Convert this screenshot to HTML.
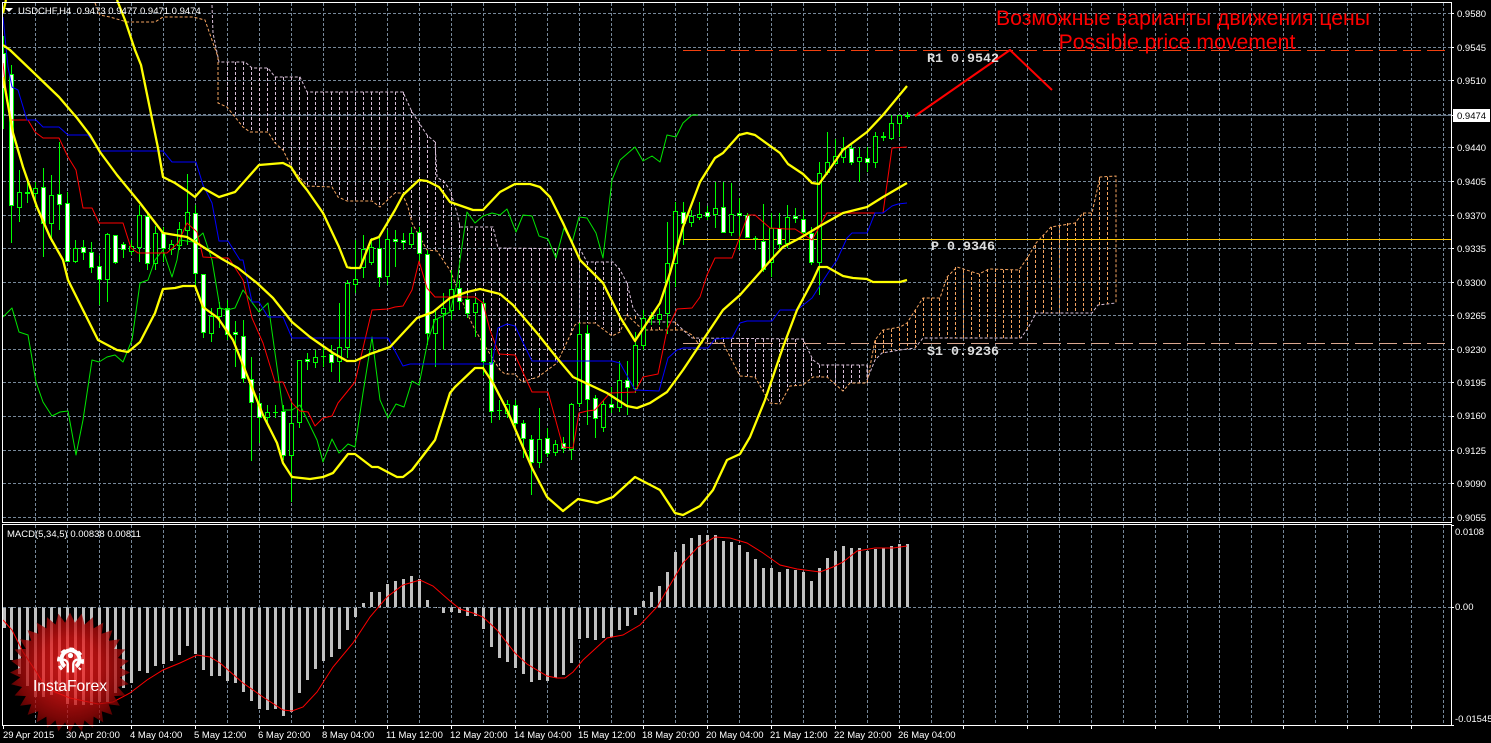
<!DOCTYPE html>
<html><head><meta charset="utf-8"><title>USDCHF,H4</title>
<style>
html,body{margin:0;padding:0;background:#000;width:1491px;height:743px;overflow:hidden}
svg{display:block}
text{font-family:"Liberation Sans","Noto Sans CJK SC",sans-serif;font-size:9.5px;fill:#fff}
.m{font-family:"Liberation Mono",monospace;font-size:13.33px;font-weight:bold;fill:#ddd}
.t{font-size:21.2px;fill:#f00;text-anchor:middle}
</style></head><body>
<svg width="1491" height="743" viewBox="0 0 1491 743" xmlns="http://www.w3.org/2000/svg">
<defs>
<radialGradient id="lg" gradientUnits="userSpaceOnUse" cx="0" cy="-6" r="66">
<stop offset="0" stop-color="#ff2020"/><stop offset=".45" stop-color="#e01414"/><stop offset=".8" stop-color="#a00808"/><stop offset="1" stop-color="#6a0000"/>
</radialGradient>
</defs>
<rect width="1491" height="743" fill="#000"/>
<!-- grid -->
<g fill="none" stroke="#778899" stroke-dasharray="3 2">
<path d="M3 13.5H1451M3 47.5H1451M3 80.5H1451M3 114.5H1451M3 147.5H1451M3 181.5H1451M3 215.5H1451M3 248.5H1451M3 282.5H1451M3 315.5H1451M3 349.5H1451M3 382.5H1451M3 416.5H1451M3 450.5H1451M3 483.5H1451M3 517.5H1451"/>
<path d="M35.5 3V522M67.5 3V522M99.5 3V522M131.5 3V522M163.5 3V522M195.5 3V522M227.5 3V522M259.5 3V522M291.5 3V522M323.5 3V522M355.5 3V522M387.5 3V522M419.5 3V522M451.5 3V522M483.5 3V522M515.5 3V522M547.5 3V522M579.5 3V522M611.5 3V522M643.5 3V522M675.5 3V522M707.5 3V522M739.5 3V522M771.5 3V522M803.5 3V522M835.5 3V522M867.5 3V522M899.5 3V522M931.5 3V522M963.5 3V522M995.5 3V522M1027.5 3V522M1059.5 3V522M1091.5 3V522M1123.5 3V522M1155.5 3V522M1187.5 3V522M1219.5 3V522M1251.5 3V522M1283.5 3V522M1315.5 3V522M1347.5 3V522M1379.5 3V522M1411.5 3V522M1443.5 3V522"/>
<path d="M35.5 525V725M67.5 525V725M99.5 525V725M131.5 525V725M163.5 525V725M195.5 525V725M227.5 525V725M259.5 525V725M291.5 525V725M323.5 525V725M355.5 525V725M387.5 525V725M419.5 525V725M451.5 525V725M483.5 525V725M515.5 525V725M547.5 525V725M579.5 525V725M611.5 525V725M643.5 525V725M675.5 525V725M707.5 525V725M739.5 525V725M771.5 525V725M803.5 525V725M835.5 525V725M867.5 525V725M899.5 525V725M931.5 525V725M963.5 525V725M995.5 525V725M1027.5 525V725M1059.5 525V725M1091.5 525V725M1123.5 525V725M1155.5 525V725M1187.5 525V725M1219.5 525V725M1251.5 525V725M1283.5 525V725M1315.5 525V725M1347.5 525V725M1379.5 525V725M1411.5 525V725M1443.5 525V725"/>
</g>
<path d="M3 115.500H1451" stroke="#5f6f80" fill="none"/>
<!-- ichimoku cloud -->
<g fill="none" stroke-dasharray="3 2">
<path stroke="#d8bfd8" d="M212 5L213 33L219 62H245L252 68H268L275 77H300L307 92H403L412 112L427 135L435 142L437 177L445 183L450 190L457 213L460 227H493L498 248L580 249L587 262H613L620 270L627 283L633 308L643 322H675L683 330L692 338L803 339L813 360L820 365H867V380L875 360L882 353L900 350L915 348L923 338H1021L1028 328L1036 313H1092L1098 305L1116 303"/>
<path stroke="#d8bfd8" d="M227.5 62V107M235.5 62V114M243.5 62V127M251.5 67V132M259.5 68V132M267.5 68V132M275.5 77V143M283.5 77V150M291.5 77V167M299.5 77V180M307.5 92V186M315.5 92V186M323.5 92V187M331.5 92V187M339.5 92V197M347.5 92V201M355.5 92V201M363.5 92V202M371.5 92V202M379.5 92V207M387.5 92V200M395.5 92V193M403.5 92V193M411.5 110V220M419.5 122V238M427.5 135V250M435.5 142V251M443.5 180V260M451.5 192V272M459.5 225V308M467.5 228V313M475.5 228V330M483.5 228V343M491.5 228V358M499.5 248V370M507.5 248V374M515.5 248V374M523.5 248V382M531.5 248V379M539.5 248V377M547.5 248V370M555.5 248V363M563.5 248V350M571.5 248V335M579.5 250V323M587.5 262V323M595.5 262V323M603.5 262V328M611.5 262V336M619.5 268V332M627.5 283V315M699.5 339V343M707.5 339V343M715.5 339V343M723.5 339V343M731.5 339V360M739.5 339V375M747.5 339V376M755.5 339V377M763.5 339V392M771.5 339V403M779.5 339V404M787.5 339V390M795.5 339V386M803.5 339V385M811.5 358V378M819.5 365V377M827.5 365V377M835.5 365V386M843.5 365V391M851.5 365V383M859.5 365V383M867.5 365V383"/>
<path stroke="#f4a460" d="M95 3L100 15L110 17L127 22H155L163 17H193L205 20L213 43L218 57V103L227 107L243 127L250 132H268L275 143L283 150L292 168L307 186L332 187L338 197L347 201H372L380 207L395 193H402L408 207L412 223L427 250L437 251L443 260L450 270L467 313L475 330L483 343L500 370L505 374H515L522 382L538 377L557 363L575 325L578 323H595L612 336L620 332L627 315L643 330H683L692 335L698 343H723L740 376L755 377L770 403L780 404L790 386L803 385L813 377H827L843 391L850 383H867L875 340L883 330L900 327L907 323L923 298H940L947 277L957 267L979 274L989 269L1019 270L1028 257L1036 243L1051 227L1075 223L1083 213H1092L1100 177L1116 176V303"/>
<path stroke="#f4a460" d="M635.5 316V320M643.5 322V330M651.5 322V330M659.5 322V330M667.5 322V330M675.5 322V330M875.5 340V360M883.5 330V353M891.5 329V351M899.5 328V350M907.5 323V349M915.5 310V348M923.5 298V338M931.5 298V338M939.5 298V338M947.5 277V338M955.5 267V338M963.5 270V338M971.5 272V338M979.5 274V338M987.5 269V338M995.5 269V338M1003.5 270V338M1011.5 270V338M1019.5 270V338M1027.5 257V330M1035.5 245V313M1043.5 235V313M1051.5 227V313M1059.5 225V313M1067.5 223V313M1075.5 223V313M1083.5 213V313M1091.5 213V313M1099.5 177V305M1107.5 177V304"/>
</g>
<!-- levels -->
<g fill="none">
<path d="M683 50.5H1446" stroke="#f1400f" stroke-dasharray="18 6"/>
<path d="M683 343.5H1446" stroke="#dba78f" stroke-dasharray="18 6"/>
<path d="M683 239.5H1451" stroke="#ffc800"/>
</g>
<!-- candles -->
<path fill="none" stroke="#00ff00" d="M3.5 36V129M11.5 65V243M19.5 170V222M27.5 182V203M35.5 182V207M43.5 168V257M51.5 175V242M59.5 142V230M67.5 192V262M75.5 240V263M83.5 240V260M91.5 242V273M99.5 255V305M107.5 233V302M115.5 235V264M123.5 242V258M131.5 240V255M139.5 205V262M147.5 212V270M155.5 226V270M163.5 227V262M171.5 240V255M179.5 222V250M187.5 174V245M195.5 205V290M203.5 274V338M211.5 308V342M219.5 302V328M227.5 300V340M235.5 321V367M243.5 320V383M251.5 357V461M259.5 395V443M267.5 405V425M275.5 405V418M283.5 405V460M291.5 402V502M299.5 360V428M307.5 353V370M315.5 350V368M323.5 345V367M331.5 345V372M339.5 303V382M347.5 280V358M355.5 240V293M363.5 235V278M371.5 238V265M379.5 238V287M387.5 230V285M395.5 230V267M403.5 233V250M411.5 227V248M419.5 227V262M427.5 250V345M435.5 310V367M443.5 293V350M451.5 270V320M459.5 280V310M467.5 295V318M475.5 298V337M483.5 300V375M491.5 348V423M499.5 400V420M507.5 400V418M515.5 400V428M523.5 420V458M531.5 435V495M539.5 408V468M547.5 428V457M555.5 440V456M563.5 437V453M571.5 403V460M579.5 323V407M587.5 325V425M595.5 395V438M603.5 400V432M611.5 387V413M619.5 361V412M627.5 361V415M635.5 332V393M643.5 310V350M651.5 312V325M659.5 308V325M667.5 222V334M675.5 202V287M683.5 202V245M691.5 210V227M699.5 202V220M707.5 206V220M715.5 182V228M723.5 182V233M731.5 183V236M739.5 198V250M747.5 213V238M755.5 236V250M763.5 204V272M771.5 213V277M779.5 213V250M787.5 205V248M795.5 208V223M803.5 210V236M811.5 227V265M819.5 162V295M827.5 132V175M835.5 139V165M843.5 137V163M851.5 145V165M859.5 147V182M867.5 147V172M875.5 132V168M883.5 132V141M891.5 115V140M899.5 115V137M907.5 112V119M25 193.5h5M25 192.5h5M273 412.5h5M321 356.5h5M497 410.5h5M753 238.5h5M881 137.5h5M881 136.5h5M905 116.5h5M905 115.5h5"/>
<path fill="#000" stroke="#00ff00" d="M17.5 192.5h4V207.5h-4zM33.5 188.5h4V193.5h-4zM49.5 195.5h4V223.5h-4zM73.5 248.5h4V261.5h-4zM105.5 234.5h4V279.5h-4zM129.5 246.5h4V251.5h-4zM137.5 215.5h4V247.5h-4zM153.5 233.5h4V263.5h-4zM169.5 244.5h4V249.5h-4zM177.5 229.5h4V245.5h-4zM185.5 212.5h4V230.5h-4zM209.5 316.5h4V333.5h-4zM217.5 308.5h4V316.5h-4zM265.5 412.5h4V417.5h-4zM289.5 423.5h4V455.5h-4zM297.5 360.5h4V422.5h-4zM313.5 357.5h4V362.5h-4zM337.5 347.5h4V361.5h-4zM345.5 283.5h4V347.5h-4zM353.5 279.5h4V284.5h-4zM361.5 249.5h4V267.5h-4zM369.5 247.5h4V262.5h-4zM385.5 239.5h4V276.5h-4zM409.5 233.5h4V244.5h-4zM433.5 319.5h4V333.5h-4zM441.5 308.5h4V313.5h-4zM449.5 289.5h4V310.5h-4zM473.5 303.5h4V312.5h-4zM505.5 404.5h4V413.5h-4zM537.5 439.5h4V462.5h-4zM553.5 444.5h4V452.5h-4zM569.5 404.5h4V449.5h-4zM577.5 334.5h4V403.5h-4zM601.5 404.5h4V427.5h-4zM617.5 380.5h4V407.5h-4zM633.5 345.5h4V388.5h-4zM641.5 318.5h4V345.5h-4zM649.5 316.5h4V318.5h-4zM657.5 314.5h4V319.5h-4zM665.5 263.5h4V313.5h-4zM673.5 211.5h4V263.5h-4zM689.5 216.5h4V222.5h-4zM697.5 214.5h4V217.5h-4zM713.5 208.5h4V214.5h-4zM729.5 214.5h4V232.5h-4zM769.5 228.5h4V262.5h-4zM785.5 217.5h4V243.5h-4zM817.5 173.5h4V262.5h-4zM825.5 162.5h4V172.5h-4zM833.5 156.5h4V163.5h-4zM841.5 148.5h4V157.5h-4zM857.5 157.5h4V161.5h-4zM873.5 136.5h4V162.5h-4zM889.5 123.5h4V138.5h-4zM897.5 115.5h4V123.5h-4z"/>
<path fill="#fff" stroke="#00ff00" d="M1.5 53.5h4V88.5h-4zM9.5 74.5h4V205.5h-4zM41.5 187.5h4V223.5h-4zM57.5 194.5h4V204.5h-4zM65.5 203.5h4V261.5h-4zM81.5 247.5h4V252.5h-4zM89.5 252.5h4V267.5h-4zM97.5 266.5h4V279.5h-4zM113.5 235.5h4V262.5h-4zM121.5 244.5h4V249.5h-4zM145.5 216.5h4V263.5h-4zM161.5 233.5h4V248.5h-4zM193.5 213.5h4V273.5h-4zM201.5 274.5h4V332.5h-4zM225.5 308.5h4V334.5h-4zM233.5 332.5h4V334.5h-4zM241.5 336.5h4V378.5h-4zM249.5 379.5h4V402.5h-4zM257.5 403.5h4V417.5h-4zM281.5 411.5h4V455.5h-4zM305.5 359.5h4V361.5h-4zM329.5 354.5h4V362.5h-4zM377.5 248.5h4V277.5h-4zM393.5 239.5h4V241.5h-4zM401.5 240.5h4V242.5h-4zM417.5 232.5h4V253.5h-4zM425.5 254.5h4V333.5h-4zM457.5 288.5h4V301.5h-4zM465.5 299.5h4V313.5h-4zM481.5 303.5h4V361.5h-4zM489.5 362.5h4V411.5h-4zM513.5 405.5h4V423.5h-4zM521.5 423.5h4V438.5h-4zM529.5 439.5h4V462.5h-4zM545.5 438.5h4V453.5h-4zM561.5 443.5h4V448.5h-4zM585.5 333.5h4V399.5h-4zM593.5 398.5h4V418.5h-4zM609.5 404.5h4V407.5h-4zM625.5 380.5h4V387.5h-4zM681.5 212.5h4V223.5h-4zM705.5 212.5h4V216.5h-4zM721.5 207.5h4V232.5h-4zM737.5 213.5h4V215.5h-4zM745.5 215.5h4V237.5h-4zM761.5 241.5h4V269.5h-4zM777.5 228.5h4V244.5h-4zM793.5 216.5h4V218.5h-4zM801.5 219.5h4V232.5h-4zM809.5 233.5h4V262.5h-4zM849.5 148.5h4V162.5h-4zM865.5 158.5h4V162.5h-4z"/>
<!-- indicators -->
<g fill="none" stroke-linejoin="round">
<path stroke="#00e600" d="M3 317L12 308L19 332L28 335L36 382L43 402L52 416L60 412L68 411L76 455L83 420L92 360L99 362L107 357L115 355L123 362L132 340L140 283L148 280L155 260L163 250L172 277L177 260L180 240L193 242L203 233L212 260L220 308L227 310L235 308L243 290L259 312L268 303L283 410L292 410L300 405L317 440L323 462L332 439L339 453L348 444L355 447L363 393L372 337L380 400L388 418L396 404L404 407L412 381L419 385L428 340L435 320L450 312L457 283L460 260L467 212L475 223L483 216L492 213L500 215L507 209L516 232L523 215L532 216L539 236L548 239L556 258L564 228L572 243L579 217L587 218L596 233L603 258L612 180L620 160L635 147L643 161L652 156L660 162L667 135L676 137L683 123L692 115H698"/>
<path stroke="#f00" d="M3 63L5 83L11 120H28L35 132L43 138H59L68 157L76 170L83 208H92L99 223H123L131 248L138 253H167L178 243L187 223L197 232L203 257L220 258H228L230 260L243 280L252 318L263 343L275 382H283L292 403L300 411L308 412L315 426L323 418L332 416L338 403L355 382L372 310L388 309L395 307L403 306L412 290L419 261L427 288L435 297H475L483 303L490 330L499 354L515 355L532 392H548L563 447L573 448L579 413L587 411L595 410L610 393L635 392L643 377L658 374L667 330L677 309L692 308L700 297L707 275L715 258H732L748 215H755L770 228L787 229H795L812 240L827 213H883L892 148L907 147"/>
<path stroke="#0000ff" d="M3 17L8 67L12 87L18 90L27 120H36L43 127H59L68 135H88L100 151H163L172 162H196L203 185L212 203L219 241H228L240 260L243 260L252 302H259L268 317H283L292 338H388L403 366L410 364H492L498 328L507 324L515 326L532 361H612L620 363L635 390L659 391L668 358L677 350L683 348H708L715 339L732 338L740 323L747 321H772L780 310H797L812 298L828 273L837 260L847 238L852 233H867L875 213H883L892 206L898 204L907 203"/>
<g stroke="#ffff00" stroke-width="2.300">
<path d="M117 0L125 20L135 50L141 65L158 148L163 177L175 183L187 191L195 197L203 188L219 197L235 192L259 165L283 163L291 167L299 180L307 190L323 213L331 230L339 247L347 267L351 268H360L371 240L379 237L395 210L403 195L419 180L427 181L439 187L450 202L473 210H483L500 192L515 184H530L540 187L550 197L563 223L580 260L603 283L620 317L635 341L660 303L670 273L683 227L700 182L715 158L723 153L739 135L747 133L755 135L780 153L788 164L803 174L812 183L819 184L827 173L843 150L867 132L883 115L907 86"/>
<path d="M3 45L10 50L33 72L59 97L77 118L90 135L100 152L117 175L140 203L163 233L187 237L200 245L222 259L238 268L257 283L273 298L292 322L310 337L333 353L347 361H355L370 354L390 347L417 318L433 312L450 298L467 292L480 289L500 294L513 305L537 333L557 358L573 377L607 393L627 406L637 408L650 403L667 392L683 370L723 310L740 295L770 261L783 247L800 238L820 226L843 213L867 207L883 197L907 183"/>
<path d="M3 77L13 133L23 167L37 207L50 237L63 260L68 280L98 340L117 350L128 352L140 342L155 313L163 289L175 288L183 286H195L203 307L218 318L233 340L243 365L263 415L277 443L283 463L292 477L310 479L323 477L333 473L348 454H355L372 467L378 467L397 477H403L412 470L435 440L450 393L455 387L475 368L483 368L493 383L507 410L532 468L547 497L563 511L578 499L597 503L613 497L635 477L660 490L675 513L683 515L700 506L713 490L727 460L740 454L750 437L765 400L783 347L797 310L813 280L819 267H827L843 276L853 278L867 279L873 282H900L907 280"/>
<path d="M6 0L3 13"/>
</g>
<path stroke="#f00" stroke-width="2" d="M915 116L1010 50L1052 90"/>
</g>
<!-- macd -->
<path fill="none" stroke="#c0c0c0" stroke-width="3" d="M4.5 607V628M11.5 607V660M19.5 607V674M27.5 607V686M35.5 607V697M43.5 607V697M51.5 607V695M59.5 607V692M67.5 607V704M75.5 607V705M83.5 607V705M91.5 607V705M99.5 607V702M107.5 607V702M115.5 607V693M123.5 607V688M131.5 607V683M139.5 607V671M147.5 607V673M155.5 607V666M163.5 607V664M171.5 607V661M179.5 607V655M187.5 607V646M195.5 607V654M203.5 607V670M211.5 607V676M219.5 607V676M227.5 607V681M235.5 607V683M243.5 607V692M251.5 607V701M259.5 607V709M267.5 607V710M275.5 607V709M283.5 607V716M291.5 607V712M299.5 607V693M307.5 607V680M315.5 607V669M323.5 607V661M331.5 607V657M339.5 607V649M347.5 607V630M355.5 607V617M363.5 607V603M371.5 607V592M379.5 607V592M387.5 607V584M395.5 607V581M403.5 607V579M411.5 607V576M419.5 607V579M427.5 607V600M435.5 607V608M443.5 607V613M451.5 607V612M459.5 607V613M467.5 607V616M475.5 607V616M483.5 607V629M491.5 607V647M499.5 607V658M507.5 607V662M515.5 607V668M523.5 607V674M531.5 607V682M539.5 607V680M547.5 607V681M555.5 607V678M563.5 607V675M571.5 607V663M579.5 607V639M587.5 607V638M595.5 607V640M603.5 607V638M611.5 607V637M619.5 607V630M627.5 607V626M635.5 607V615M643.5 607V601M651.5 607V592M659.5 607V586M667.5 607V572M675.5 607V552M683.5 607V544M691.5 607V538M699.5 607V535M707.5 607V535M715.5 607V535M723.5 607V541M731.5 607V542M739.5 607V545M747.5 607V552M755.5 607V559M763.5 607V568M771.5 607V568M779.5 607V572M787.5 607V569M795.5 607V570M803.5 607V572M811.5 607V581M819.5 607V568M827.5 607V558M835.5 607V551M843.5 607V546M851.5 607V548M859.5 607V548M867.5 607V551M875.5 607V549M883.5 607V548M891.5 607V546M899.5 607V544M907.5 607V544"/>
<path d="M3 607.5H1451" stroke="#778899" fill="none" stroke-dasharray="3 2"/>
<path fill="none" stroke="#f00" d="M3 620L12 630L23 652L37 673L43 683L55 692L70 698L98 704L113 702L130 693L147 680L163 670L180 663L197 655L210 657L220 663L243 683L263 697L283 710L292 711L303 707L317 692L333 667L353 643L370 617L387 597L403 585L420 580L433 586L450 601L460 609L473 613L483 617L497 630L515 653L527 664L547 676L557 678L565 678L573 672L583 660L607 638L623 635L640 625L657 607L670 585L683 563L698 547L715 537L730 538L747 543L763 553L780 565L797 569L820 572L833 567L843 562L857 551L875 548H893L907 546"/>
<!-- logo -->
<g transform="translate(70 672.5)" opacity=".76">
<polygon fill="url(#lg)" points="60,0 49.8,4.9 58.9,11.7 47.9,14.5 55.4,23 44.1,23.6 49.9,33.3 38.7,31.7 42.4,42.4 31.7,38.7 33.3,49.9 23.6,44.1 23,55.4 14.5,47.9 11.7,58.9 4.9,49.8 0,60 -4.9,49.8 -11.7,58.9 -14.5,47.9 -23,55.4 -23.6,44.1 -33.3,49.9 -31.7,38.7 -42.4,42.4 -38.7,31.7 -49.9,33.3 -44.1,23.6 -55.4,23 -47.9,14.5 -58.9,11.7 -49.8,4.9 -60,0 -49.8,-4.9 -58.9,-11.7 -47.9,-14.5 -55.4,-23 -44.1,-23.6 -49.9,-33.3 -38.7,-31.7 -42.4,-42.4 -31.7,-38.7 -33.3,-49.9 -23.6,-44.1 -23,-55.4 -14.5,-47.9 -11.7,-58.9 -4.9,-49.8 0,-60 4.9,-49.8 11.7,-58.9 14.5,-47.9 23,-55.4 23.6,-44.1 33.3,-49.9 31.7,-38.7 42.4,-42.4 38.7,-31.7 49.9,-33.3 44.1,-23.6 55.4,-23 47.9,-14.5 58.9,-11.7 49.8,-4.9"/>
</g>
<!-- logo gear -->
<g fill="none" stroke="#fff">
<path d="M65 666.500A9 9 0 1 1 76 666.500" stroke-width="4"/>
<path d="M62 669.500A12 12 0 1 1 79 669.500" stroke-width="3" stroke-dasharray="4.500 4.500"/>
<path d="M63.500 659.500Q67.500 660.500 67.800 664V672.500M77.500 659.500Q73.500 660.500 73.200 664V672.500" stroke-width="2.200"/>
</g>
<circle cx="70.500" cy="655.500" r="2.600" fill="#fff"/>
<text x="70" y="691" text-anchor="middle" style="font-size:15.7px">InstaForex</text>
<!-- frames -->
<rect x="0" y="0" width="2" height="743" fill="#000"/>
<g fill="none" stroke="#fff">
<path d="M2.500 2.500H1451.500V522.500H2.500Z"/>
<path d="M2.500 524.500H1451.500V725.500H2.500Z"/>
<path d="M1451 13.500h3M1451 47.500h3M1451 80.500h3M1451 115.500h3M1451 147.500h3M1451 181.500h3M1451 215.500h3M1451 248.500h3M1451 282.500h3M1451 315.500h3M1451 349.500h3M1451 382.500h3M1451 416.500h3M1451 450.500h3M1451 483.500h3M1451 517.500h3M1451 525.500h3M1451 607.500h3M1451 725.500h3"/>
<path d="M3.500 725v4M67.500 725v4M131.500 725v4M195.500 725v4M259.500 725v4M323.500 725v4M387.500 725v4M451.500 725v4M515.500 725v4M579.500 725v4M643.500 725v4M707.500 725v4M771.500 725v4M835.500 725v4M899.500 725v4M963.500 725v4M1027.500 725v4M1091.500 725v4M1155.500 725v4M1219.500 725v4M1283.500 725v4M1347.500 725v4M1411.500 725v4"/>
</g>
<!-- header text -->
<path d="M5 8h8l-4 4z" fill="#fff"/>
<text x="18" y="14" xml:space="preserve">USDCHF,H4  0.9473 0.9477 0.9471 0.9474</text>
<text x="7" y="537">MACD(5,34,5) 0.00838 0.00811</text>
<!-- annotations -->
<text class="t" x="1183" y="25">Возможные варианты движения цены</text>
<text class="t" x="1177" y="49">Possible price movement</text>
<text class="m" x="927" y="62">R1 0.9542</text>
<text class="m" x="931" y="250">P 0.9346</text>
<text class="m" x="927" y="355">S1 0.9236</text>
<!-- price axis -->
<rect x="1453" y="109" width="37" height="13" fill="#fff"/>
<g>
<text x="1457" y="17">0.9580</text>
<text x="1457" y="51">0.9545</text>
<text x="1457" y="84">0.9510</text>
<text x="1457" y="119" style="fill:#000">0.9474</text>
<text x="1457" y="151">0.9440</text>
<text x="1457" y="185">0.9405</text>
<text x="1457" y="219">0.9370</text>
<text x="1457" y="252">0.9335</text>
<text x="1457" y="286">0.9300</text>
<text x="1457" y="319">0.9265</text>
<text x="1457" y="353">0.9230</text>
<text x="1457" y="386">0.9195</text>
<text x="1457" y="419">0.9160</text>
<text x="1457" y="454">0.9125</text>
<text x="1457" y="487">0.9090</text>
<text x="1457" y="521">0.9055</text>
<text x="1455" y="535">0.0108</text>
<text x="1455" y="610">0.00</text>
<text x="1455" y="722">-0.01545</text>
</g>
<!-- time axis -->
<g>
<text x="3" y="738">29 Apr 2015</text>
<text x="66" y="738">30 Apr 20:00</text>
<text x="130" y="738">4 May 04:00</text>
<text x="194" y="738">5 May 12:00</text>
<text x="258" y="738">6 May 20:00</text>
<text x="322" y="738">8 May 04:00</text>
<text x="386" y="738">11 May 12:00</text>
<text x="450" y="738">12 May 20:00</text>
<text x="514" y="738">14 May 04:00</text>
<text x="578" y="738">15 May 12:00</text>
<text x="642" y="738">18 May 20:00</text>
<text x="706" y="738">20 May 04:00</text>
<text x="770" y="738">21 May 12:00</text>
<text x="834" y="738">22 May 20:00</text>
<text x="898" y="738">26 May 04:00</text>
</g>
</svg>
</body></html>
